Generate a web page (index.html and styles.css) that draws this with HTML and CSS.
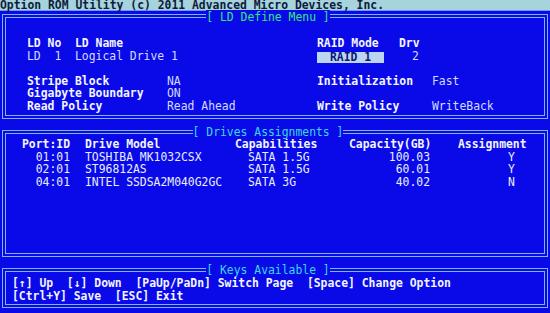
FILE: index.html
```html
<!DOCTYPE html>
<html lang="en">

<head>
  <meta charset="UTF-8" />
  <title>Option ROM Utility</title>
  <link rel="stylesheet" href="styles.css">
</head>

<body>
  <div class="titlebar">Option ROM Utility (c) 2011 Advanced Micro Devices, Inc.</div>

  <!-- LD 定义 -->
  <section class="panel panel-ld">
    <h2 class="panel-title"><span class="t-green">[ LD Define Menu ]</span></h2>
    <div class="ld-body">
      <div class="ld-left">
        <div class="row r-name"><span>LD No</span><span>LD Name</span></div>
        <div class="row r-name dim"><span>LD  1</span><span>Logical Drive 1</span></div>
        <div class="row"></div>
        <div class="row r-prop"><span>Stripe Block</span><span class="dim">NA</span></div>
        <div class="row r-prop"><span>Gigabyte Boundary</span><span class="dim">ON</span></div>
        <div class="row r-prop"><span>Read Policy</span><span class="dim">Read Ahead</span></div>
      </div>
      <div class="ld-right">
        <div class="row r-mode"><span>RAID Mode</span><span>Drv</span></div>
        <div class="row r-sel"><span class="sel">RAID 1</span><span class="dim">2</span></div>
        <div class="row"></div>
        <div class="row r-opt"><span>Initialization</span><span class="dim">Fast</span></div>
        <div class="row"></div>
        <div class="row r-opt"><span>Write Policy</span><span class="dim">WriteBack</span></div>
      </div>
    </div>
  </section>

  <!-- 硬盘分配 -->
  <section class="panel panel-drives">
    <h2 class="panel-title"><span class="t-cyan">[ Drives Assignments ]</span></h2>
    <div class="row drv head">
      <span class="c-port">Port:ID</span>
      <span>Drive Model</span>
      <span>Capabilities</span>
      <span class="c-cap">Capacity(GB)</span>
      <span class="c-asg">Assignment</span>
    </div>
    <div class="row drv data">
      <span class="c-port">01:01</span>
      <span>TOSHIBA MK1032CSX</span>
      <span class="c-sata">SATA 1.5G</span>
      <span class="c-cap">100.03</span>
      <span class="c-asg">Y</span>
    </div>
    <div class="row drv data">
      <span class="c-port">02:01</span>
      <span>ST96812AS</span>
      <span class="c-sata">SATA 1.5G</span>
      <span class="c-cap">60.01</span>
      <span class="c-asg">Y</span>
    </div>
    <div class="row drv data">
      <span class="c-port">04:01</span>
      <span>INTEL SSDSA2M040G2GC</span>
      <span class="c-sata">SATA 3G</span>
      <span class="c-cap">40.02</span>
      <span class="c-asg">N</span>
    </div>
  </section>

  <!-- 按键说明 -->
  <section class="panel panel-keys">
    <h2 class="panel-title"><span class="t-cyan">[ Keys Available ]</span></h2>
    <div class="row keys">[↑] Up  [↓] Down  [PaUp/PaDn] Switch Page  [Space] Change Option</div>
    <div class="row keys">[Ctrl+Y] Save  [ESC] Exit</div>
  </section>
</body>

</html>
```

FILE: styles.css
```css
* {
  margin: 0;
  padding: 0;
  box-sizing: border-box;
}

body {
  width: 550px;
  height: 313px;
  overflow: hidden;
  background: #0a0ae8;
  color: #f2f5ff;
  font: bold 11.4px/12.6px "DejaVu Sans Mono", "Liberation Mono", monospace;
}

.titlebar {
  height: 11px;
  line-height: 10px;
  background: #a6d3dc;
  color: #0e1a3c;
  border-bottom: 1px solid #6f98ec;
  white-space: pre;
}

.panel {
  position: relative;
  margin: 11px 2px 0;
  border: 4px double #82b4f2;
}

.panel-title {
  position: absolute;
  top: -7px;
  left: 0;
  right: 14px;
  text-align: center;
  font-size: inherit;
  font-weight: normal;
  line-height: 11px;
}

.panel-title span {
  background: #0a0ae8;
}

.t-green {
  color: #34e878;
}

.t-cyan {
  color: #3ad8ec;
}

.row {
  height: 12.6px;
  white-space: pre;
}

.dim {
  color: #d2dcff;
  font-weight: normal;
}

/* LD Define Menu */
.panel-ld {
  margin-top: 3px;
  height: 105px;
  padding: 19px 0 0 21px;
}

.panel-ld .panel-title {
  top: -6px;
}

.ld-body {
  display: flex;
}

.ld-left {
  width: 290px;
}

.ld-right {
  flex: 1;
}

.r-name,
.r-prop,
.r-mode,
.r-sel,
.r-opt {
  display: grid;
}

.r-name {
  grid-template-columns: 48px auto;
}

.r-prop {
  grid-template-columns: 140px auto;
}

.r-mode {
  grid-template-columns: 82px auto;
}

.r-sel {
  grid-template-columns: 95px auto;
}

.r-opt {
  grid-template-columns: 115px auto;
}

.sel {
  width: 67px;
  height: 11px;
  margin-top: 2px;
  background: #bcd6f2;
  color: #0c1878;
  text-align: center;
  line-height: 11px;
}

/* Drives Assignments */
.panel-drives {
  height: 127px;
  padding: 4px 0 0 15px;
}

.drv {
  display: grid;
  grid-template-columns: 64px 150px 114px 81px auto;
}

.drv.data {
  font-weight: normal;
  color: #e8eeff;
}

.c-port {
  text-align: right;
  padding-right: 15px;
}

.c-sata {
  padding-left: 13px;
}

.c-cap {
  text-align: right;
}

.c-asg {
  padding-left: 28px;
}

.drv.data .c-asg {
  padding-left: 78px;
}

/* Keys Available */
.panel-keys {
  height: 40px;
  padding: 5px 0 0 6px;
}
```
